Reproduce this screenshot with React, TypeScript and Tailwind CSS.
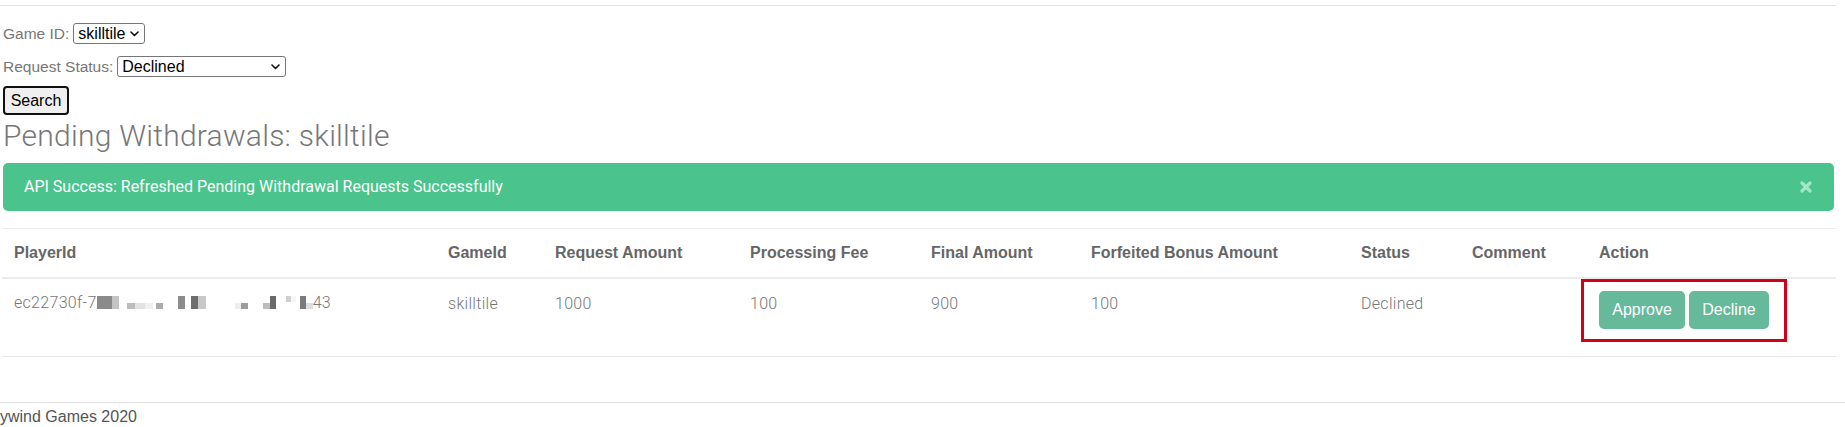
import React from "react";

// pixelated (redacted) part of the player id, drawn as grey blocks
const redacted: { w: number; c: string; h: "tall" | "short" | "top"; gap?: number }[] = [
  { w: 15, c: "#8a8a8a", h: "tall" },
  { w: 7, c: "#c4c4c4", h: "tall" },
  { w: 8, c: "#bcbcbc", h: "short", gap: 8 },
  { w: 10, c: "#e2e2e2", h: "short" },
  { w: 8, c: "#f0f0f0", h: "short" },
  { w: 7, c: "#ababab", h: "short", gap: 3 },
  { w: 7, c: "#8c8c8c", h: "tall", gap: 15 },
  { w: 7, c: "#6e6e6e", h: "tall", gap: 6 },
  { w: 8, c: "#c8c8c8", h: "tall" },
  { w: 6, c: "#ededed", h: "short", gap: 29 },
  { w: 7, c: "#9c9c9c", h: "short" },
  { w: 7, c: "#bdbdbd", h: "short", gap: 15 },
  { w: 6, c: "#6a6a6a", h: "tall" },
  { w: 5, c: "#cfcfcf", h: "top", gap: 10 },
  { w: 5, c: "#f6f6f6", h: "top" },
  { w: 6, c: "#7a7a7a", h: "tall", gap: 4 },
  { w: 7, c: "#dedede", h: "short" },
];

const columns = [
  { label: "PlayerId", width: "w-[434px]" },
  { label: "GameId", width: "w-[107px]" },
  { label: "Request Amount", width: "w-[195px]" },
  { label: "Processing Fee", width: "w-[181px]" },
  { label: "Final Amount", width: "w-[160px]" },
  { label: "Forfeited Bonus Amount", width: "w-[270px]" },
  { label: "Status", width: "w-[111px]" },
  { label: "Comment", width: "w-[127px]" },
  { label: "Action", width: "w-[249px]" },
];

function Chevron() {
  return (
    <svg width="9" height="6" viewBox="0 0 9 6" className="shrink-0">
      <path d="M1 1l3.5 3.5L8 1" fill="none" stroke="#111" strokeWidth="1.6" strokeLinecap="round" strokeLinejoin="round" />
    </svg>
  );
}

function FakeSelect({ value, width }: { value: string; width: string }) {
  return (
    <div
      className={`${width} h-[21px] flex items-center justify-between border border-[#767676] rounded-[3px] bg-white pl-[4px] pr-[5px] text-[16px] leading-none text-black font-['Liberation_Sans',sans-serif]`}
    >
      <span>{value}</span>
      <Chevron />
    </div>
  );
}

const cell = "pl-[12px] pt-[13px] align-top border-b border-[#e6e6e6]";

export default function App() {
  return (
    <div className="w-[1845px] h-[427px] overflow-hidden bg-white font-['Roboto',sans-serif]">
      <div className="w-[1836px]">
        <div className="mt-[5px] border-t border-[#e4e4e4]" />

        {/* search form */}
        <div className="pl-[3px] pt-[17px] text-[15.5px] text-[#777] font-['Liberation_Sans',sans-serif]">
          <div className="flex items-center gap-[4px] h-[21px]">
            <label>Game ID:</label>
            <FakeSelect value="skilltile" width="w-[72px]" />
          </div>
          <div className="flex items-center gap-[4px] h-[21px] mt-[12px]">
            <label>Request Status:</label>
            <FakeSelect value="Declined" width="w-[169px]" />
          </div>
          <button className="mt-[9px] w-[66px] h-[29px] border-2 border-[#111] rounded-[4px] bg-[#efefef] text-[16px] text-black">
            Search
          </button>
        </div>

        <h1 className="pl-[3px] text-[30px] leading-[36px] font-light text-[#777] mt-[3px] tracking-[0.25px]">
          Pending Withdrawals: skilltile
        </h1>

        {/* alert */}
        <div className="ml-[3px] mr-[2px] mt-[9px] h-[48px] rounded-[5px] bg-[#4ac48c] flex items-center justify-between pl-[21px] pr-[22px] text-white text-[16px]">
          <span>API Success: Refreshed Pending Withdrawal Requests Successfully</span>
          <svg width="12" height="12" viewBox="0 0 12 12">
            <path d="M2 2l8 8M10 2l-8 8" stroke="#a4e6c8" strokeWidth="3.2" strokeLinecap="round" />
          </svg>
        </div>

        {/* table */}
        <table className="ml-[2px] mt-[17px] w-[1834px] table-fixed border-collapse text-[16px]">
          <thead>
            <tr>
              {columns.map((col) => (
                <th
                  key={col.label}
                  className={`${col.width} h-[49px] pl-[12px] text-left text-[16px] font-bold text-[#666] font-['Liberation_Sans',sans-serif] border-t border-b-2 border-[#ececec]`}
                >
                  {col.label}
                </th>
              ))}
            </tr>
          </thead>
          <tbody>
            <tr className="font-light text-[#777] tracking-[0.3px]">
              <td className={`h-[79px] ${cell}`}>
                <div className="flex items-center h-[22px]">
                  <span>ec22730f-7</span>
                  {redacted.map((b, i) => (
                    <span
                      key={i}
                      className="h-[13px] flex flex-col shrink-0"
                      style={{ width: b.w, marginLeft: b.gap ?? 0 }}
                    >
                      <span
                        className="block"
                        style={{
                          background: b.c,
                          height: b.h === "tall" ? 13 : 6,
                          marginTop: b.h === "short" ? 7 : 0,
                        }}
                      />
                    </span>
                  ))}
                  <span>43</span>
                </div>
              </td>
              <td className={cell}>skilltile</td>
              <td className={cell}>1000</td>
              <td className={cell}>100</td>
              <td className={cell}>900</td>
              <td className={cell}>100</td>
              <td className={cell}>Declined</td>
              <td className={cell}></td>
              <td className="pl-[12px] pt-[12px] align-top border-b border-[#e6e6e6]">
                <div className="relative inline-flex gap-[4px] tracking-normal font-normal font-['Liberation_Sans',sans-serif]">
                  <button className="w-[86px] h-[38px] rounded-[5px] bg-[#66b99a] text-white text-[16px]">
                    Approve
                  </button>
                  <button className="w-[80px] h-[38px] rounded-[5px] bg-[#66b99a] text-white text-[16px]">
                    Decline
                  </button>
                  {/* highlight annotation */}
                  <div className="absolute -left-[18px] -right-[18px] -top-[12px] -bottom-[13px] border-[3px] border-[#d0021b] pointer-events-none" />
                </div>
              </td>
            </tr>
          </tbody>
        </table>
      </div>

      {/* footer */}
      <div className="mt-[45px] border-t border-[#e0e0e0] w-full" />
      <div className="mt-[2px] text-[16px] text-[#555] font-['Liberation_Sans',sans-serif] whitespace-nowrap">
        ywind Games 2020
      </div>
    </div>
  );
}
